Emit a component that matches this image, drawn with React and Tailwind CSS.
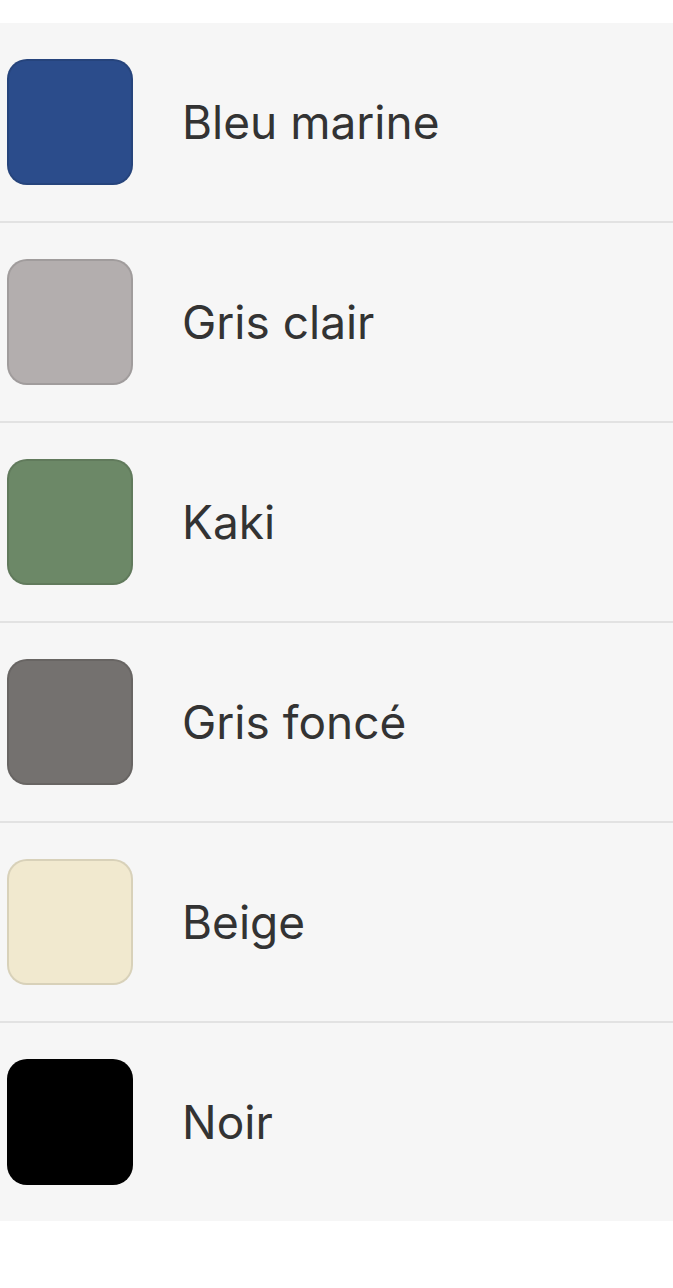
const colors = [
  { name: 'Bleu marine', hex: 'bg-[#2b4c8b]' },
  { name: 'Gris clair', hex: 'bg-[#b3aeae]' },
  { name: 'Kaki', hex: 'bg-[#6c8867]' },
  { name: 'Gris foncé', hex: 'bg-[#74716f]' },
  { name: 'Beige', hex: 'bg-[#f1e9cf]' },
  { name: 'Noir', hex: 'bg-black' },
]

export default function App() {
  return (
    <div className="min-h-[1288px] bg-white pt-[23px] font-['Inter',sans-serif]">
      <div className="bg-[#f6f6f6]">
        {colors.map((c, i) => (
          <div
            key={c.name}
            className={
              'flex h-[198px] items-center box-content ' +
              (i < colors.length - 1 ? 'border-b-2 border-[#e2e2e2]' : '')
            }
          >
            <div className={'ml-[7px] h-[126px] w-[126px] rounded-[20px] border-2 border-black/10 ' + c.hex} />
            <span className="ml-[49px] text-[46px] leading-none text-[#333333]">{c.name}</span>
          </div>
        ))}
      </div>
    </div>
  )
}
